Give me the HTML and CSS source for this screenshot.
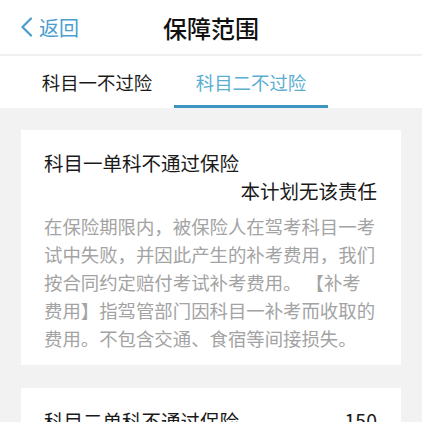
FILE: index.html
```html
<!DOCTYPE html>
<html lang="zh-CN">
<head>
    <meta charset="UTF-8">
    <meta name="viewport" content="width=device-width, initial-scale=1.0">
    <title>保障范围</title>
    <link rel="stylesheet" href="styles.css">
</head>
<body>
    <header class="navBar">
        <a class="backLink" href="#">
            <svg class="backIcon" width="13" height="20" viewBox="0 0 13 20">
                <path d="M11 1.5 L2.5 10 L11 18.5" fill="none" stroke="currentColor" stroke-width="2.2" stroke-linecap="round" stroke-linejoin="round"/>
            </svg>
            <span>返回</span>
        </a>
        <h1 class="navTitle">保障范围</h1>
        <div></div>
    </header>

    <nav class="tabBar">
        <div class="tab">科目一不过险</div>
        <div class="tab active">科目二不过险</div>
    </nav>

    <main class="content">
        <section class="card">
            <div class="cardHead">
                <span>科目一单科不通过保险</span>
            </div>
            <div class="cardNote">本计划无该责任</div>
            <p class="cardDesc">在保险期限内，被保险人在驾考科目一考试中失败，并因此产生的补考费用，我们按合同约定赔付考试补考费用。 【补考费用】指驾管部门因科目一补考而收取的费用。不包含交通、食宿等间接损失。</p>
        </section>

        <section class="card">
            <div class="cardHead">
                <span>科目二单科不通过保险</span>
                <span>150</span>
            </div>
        </section>
    </main>
</body>
</html>
```

FILE: styles.css
```css
body {
    margin: 0;
    background-color: #f2f2f2;
    font-family: 'Noto Sans CJK SC', 'Noto Sans', sans-serif;
    color: #1a1a1a;
}

.navBar {
    display: grid;
    grid-template-columns: 1fr auto 1fr;
    align-items: center;
    height: 54px;
    background: #ffffff;
    border-bottom: 2px solid #f0f0f0;
}

.backLink {
    display: flex;
    align-items: center;
    gap: 6px;
    padding-left: 20px;
    color: #4a9dcf;
    font-size: 20px;
    text-decoration: none;
}

.backIcon {
    display: block;
}

.navTitle {
    margin: 0;
    font-size: 24px;
    font-weight: 500;
    color: #111111;
}

.tabBar {
    display: flex;
    height: 52px;
    padding-left: 20px;
    background: #ffffff;
}

.tab {
    width: 154px;
    display: flex;
    align-items: center;
    justify-content: center;
    font-size: 18.4px;
    color: #1a1a1a;
    box-sizing: border-box;
    border-bottom: 3px solid transparent;
    padding-top: 3px;
}

.tab.active {
    color: #5aaed0;
    border-bottom-color: #3d95bf;
}

.content {
    padding: 22px 21px;
    display: flex;
    flex-direction: column;
    gap: 23px;
}

.card {
    background: #ffffff;
    padding: 20px 24px 13px 23px;
}

.cardHead {
    display: flex;
    justify-content: space-between;
    font-size: 19.5px;
    line-height: 26px;
}

.cardNote {
    margin-top: 2px;
    text-align: right;
    font-size: 19.5px;
    line-height: 26px;
}

.cardDesc {
    margin: 8px 0 0;
    font-size: 18.4px;
    line-height: 28px;
    color: #a3a3a3;
}
```
